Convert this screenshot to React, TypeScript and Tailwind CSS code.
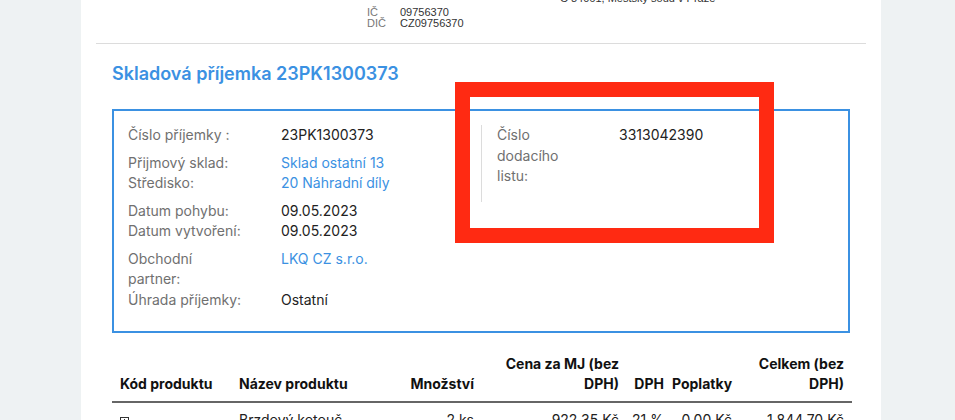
import React from 'react';

const leftRows = [
  [{ label: 'Číslo příjemky :', value: '23PK1300373' }],
  [
    { label: 'Přijmový sklad:', value: 'Sklad ostatní 13', link: true },
    { label: 'Středisko:', value: '20 Náhradní díly', link: true },
  ],
  [
    { label: 'Datum pohybu:', value: '09.05.2023' },
    { label: 'Datum vytvoření:', value: '09.05.2023' },
  ],
  [
    { label: 'Obchodní partner:', value: 'LKQ CZ s.r.o.', link: true },
    { label: 'Úhrada příjemky:', value: 'Ostatní' },
  ],
];

const PlusBox: React.FC = () => (
  <svg width="9" height="9" viewBox="0 0 9 9" className="inline-block">
    <rect x="0.5" y="0.5" width="8" height="8" fill="none" stroke="#333" strokeWidth="1" />
    <path d="M4.5 2v5M2 4.5h5" stroke="#333" strokeWidth="1" />
  </svg>
);

const App: React.FC = () => {
  return (
    <div className="relative h-[420px] overflow-hidden bg-[#eef2f3] font-['Inter',sans-serif]">
      <div className="ml-[81px] h-[420px] w-[800px] bg-white px-[15px]">
        {/* company header (scrolled) */}
        <div className="flex h-[44px] border-b border-[#dcdcdc] font-['Liberation_Sans',sans-serif] text-[11px] leading-[11px]">
          <div className="ml-[271px] w-[193px] pt-[7px]">
            <div className="flex">
              <span className="w-[33px] text-[#777]">IČ</span>
              <span className="text-[#333]">09756370</span>
            </div>
            <div className="flex">
              <span className="w-[33px] text-[#777]">DIČ</span>
              <span className="text-[#333]">CZ09756370</span>
            </div>
          </div>
          <div className="-mt-[7px] text-[#333]">C 84061, Městský soud v Praze</div>
        </div>

        <div className="px-4">
          <h1 className="pt-[16px] text-[18px] font-semibold leading-[27px] text-[#3b91e2]">
            Skladová příjemka 23PK1300373
          </h1>

          <div className="mt-[22px] grid grid-cols-2 border-2 border-[#3b91e2] px-[14px] pt-[14px] pb-[21px] text-[14px] leading-[20.5px]">
            <div className="flex flex-col gap-[7px]">
              {leftRows.map((group, gi) => (
                <div key={gi}>
                  {group.map((row, i) => (
                    <div key={i} className="flex">
                      <div className="w-[153px] shrink-0 pr-[36px] text-[#707070]">{row.label}</div>
                      <div className={row.link ? 'text-[#3b91e2]' : 'text-[#222]'}>{row.value}</div>
                    </div>
                  ))}
                </div>
              ))}
            </div>
            <div className="self-start">
              <div className="flex border-l border-[#dcdcdc] pb-[15px] pl-[15px]">
                <div className="w-[122px] shrink-0 pr-[30px] text-[#707070]">Číslo dodacího listu:</div>
                <div className="text-[#222]">3313042390</div>
              </div>
            </div>
          </div>

          <table className="mt-[13px] w-full table-fixed border-collapse text-[14px] leading-[19.5px] text-[#111]">
            <colgroup>
              <col className="w-[119px]" />
              <col className="w-[160px]" />
              <col className="w-[91px]" />
              <col className="w-[145px]" />
              <col className="w-[37px]" />
              <col className="w-[76px]" />
              <col className="w-[112px]" />
            </colgroup>
            <thead>
              <tr className="border-b-2 border-[#666] align-bottom font-bold">
                <th className="px-2 py-2 text-left">Kód produktu</th>
                <th className="px-2 py-2 text-left">Název produktu</th>
                <th className="px-2 py-2 text-right">Množství</th>
                <th className="px-2 py-2 text-right">Cena za MJ (bez DPH)</th>
                <th className="px-0 py-2 text-right">DPH</th>
                <th className="px-2 py-2 text-right">Poplatky</th>
                <th className="px-2 py-2 text-right">Celkem (bez DPH)</th>
              </tr>
            </thead>
            <tbody className="text-[#222]">
              <tr className="align-top">
                <td className="px-2 pt-[7px]">
                  <PlusBox />
                </td>
                <td className="px-2 pt-[7px]">Brzdový kotouč</td>
                <td className="px-2 pt-[7px] text-right">2 ks</td>
                <td className="px-2 pt-[7px] text-right">922,35 Kč</td>
                <td className="px-0 pt-[7px] text-right">21 %</td>
                <td className="px-2 pt-[7px] text-right">0,00 Kč</td>
                <td className="px-2 pt-[7px] text-right">1 844,70 Kč</td>
              </tr>
            </tbody>
          </table>
        </div>
      </div>

      {/* highlight annotation */}
      <div className="pointer-events-none absolute left-[455px] top-[82px] h-[161px] w-[319px] border-[15px] border-[#ff2a12]" />
    </div>
  );
};

export default App;
